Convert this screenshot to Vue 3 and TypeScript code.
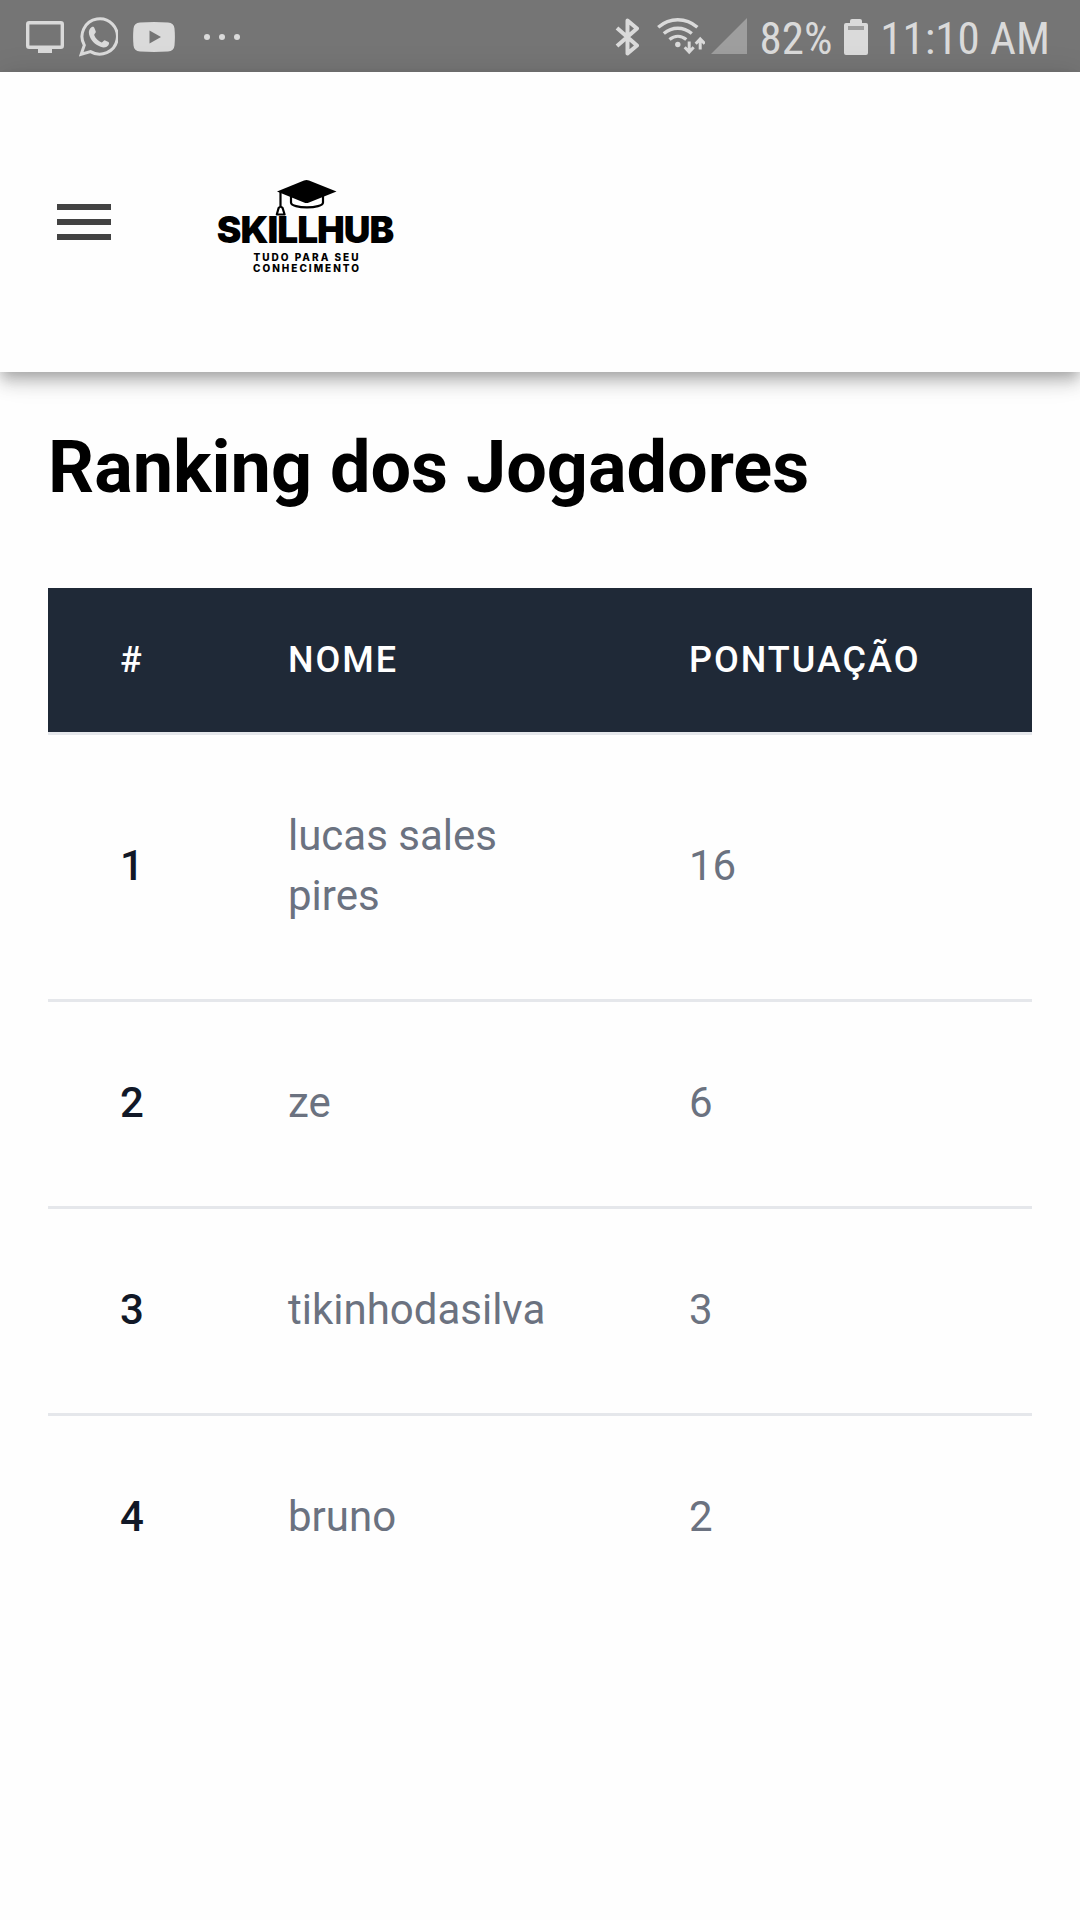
<script setup lang="ts">
interface Player {
  name: string
  score: number
}

const players: Player[] = [
  { name: 'lucas sales pires', score: 16 },
  { name: 'ze', score: 6 },
  { name: 'tikinhodasilva', score: 3 },
  { name: 'bruno', score: 2 },
]
</script>

<template>
  <div class="screen">
    <div class="status">
      <div class="notifications">
        <svg width="38" height="38" viewBox="0 0 38 38" aria-label="Transmissão">
          <rect x="1.700" y="4.700" width="34.600" height="24.600" rx="1.500" fill="none" stroke="currentColor" stroke-width="3.400" />
          <path d="M12 30h14v5H12z" fill="currentColor" />
        </svg>
        <svg width="39" height="40" viewBox="0 0 39 40" aria-label="WhatsApp">
          <path d="M5.300 28.200A17.700 17.700 0 1 1 11.500 34.600L2.200 37.300z" fill="none" stroke="currentColor" stroke-width="3" />
          <path d="M12.800 10c1.400-.6 2.400.1 2.800 1.400l1.200 3.200c.4 1.300-1.700 2.500-1.600 3.300 1.200 3.300 4.200 6.200 7.500 7.500 1 .2 2.200-2.500 3.500-2l3.300 1.700c1 .6.600 2.400-.3 3.500-1.700 2-4.700 2.300-7.600 1.200C15.800 27.600 11.500 23 10.100 17.500c-.8-3.300.4-6.400 2.700-7.500z" fill="currentColor" />
        </svg>
        <svg width="42" height="30" viewBox="0 0 42 30" aria-label="YouTube">
          <path fill-rule="evenodd" d="M7 .5Q21-.3 35 .5q6 .3 6.500 6 .8 8.500 0 17-.5 5.700-6.500 6-14 .8-28 0-6-.3-6.500-6-.8-8.500 0-17Q1 .8 7 .500zM16.500 8.500v13L28 15z" fill="currentColor" />
        </svg>
        <svg class="more" width="36" height="8" viewBox="0 0 36 8" fill="currentColor" aria-label="Mais notificações">
          <circle cx="3" cy="4" r="3" />
          <circle cx="18" cy="4" r="3" />
          <circle cx="33" cy="4" r="3" />
        </svg>
      </div>
      <div class="system">
        <svg width="24" height="38" viewBox="0 0 24 38" aria-label="Bluetooth">
          <path d="M2 10l20 17.500-9.500 8V2.500l9.500 8L2 28" fill="none" stroke="currentColor" stroke-width="4" stroke-linejoin="round" />
        </svg>
        <svg class="wifi" width="48" height="38" viewBox="0 0 48 38" fill="none" stroke="currentColor" aria-label="Wi-Fi">
          <path d="M1.200 9.200c11.600-10 27.600-10 39.200 0M6.800 15.500c8.500-7 19.500-7 28 0M12.500 21.500c5.200-4.200 11.600-4.200 16.800 0" stroke-width="3.400" />
          <circle cx="20.800" cy="26.500" r="2.700" fill="currentColor" stroke="none" />
          <path d="M32.200 23.500v9.500M27.700 29.300l4.500 4.700 4.500-4.700M43.200 31.500v-9.500M38.700 25.700l4.500-4.700 4.500 4.700" stroke-width="3" />
        </svg>
        <svg class="signal" width="36" height="38" viewBox="0 0 36 38" aria-label="Sinal móvel">
          <path d="M36 0v36H0z" fill="#9e9e9e" />
        </svg>
        <span>82%</span>
        <svg width="24" height="36" viewBox="0 0 24 36" aria-label="Bateria">
          <path d="M6 4V2q0-2 2-2h8q2 0 2 2v2h4q2 0 2 2v28q0 2-2 2H2q-2 0-2-2V6q0-2 2-2z" fill="currentColor" />
          <path d="M4 7h16v4H4z" fill="#9e9e9e" />
        </svg>
        <span>11:10 AM</span>
      </div>
    </div>

    <header class="toolbar">
      <button class="menu" type="button" aria-label="Abrir menu">
        <svg width="72" height="72" viewBox="0 0 24 24" fill="currentColor">
          <path d="M3 18h18v-2H3v2zm0-5h18v-2H3v2zm0-7v2h18V6H3z" />
        </svg>
      </button>
      <a class="logo" href="#" aria-label="Skillhub">
        <svg width="210" height="114" viewBox="0 0 210 114">
          <path d="M91 31v6.500c0 6.500 32 6.500 32 0V31" fill="#fff" stroke="#000" stroke-width="2.200" />
          <path d="M77 26.500L104 15.500q2.500-1 5 0L136.500 26.500 109 37.500q-2.500 1-5 0z" />
          <path d="M80.500 27v14" stroke="#000" stroke-width="2.200" />
          <path d="M78.600 43q2-2.500 4 0l2 6.500H76.800z" fill="#fff" stroke="#000" stroke-width="2.200" stroke-linejoin="round" />
          <text class="brand" x="105" y="78">SKILLHUB</text>
          <text class="tagline" x="107" y="96">TUDO PARA SEU</text>
          <text class="tagline" x="107" y="107">CONHECIMENTO</text>
        </svg>
      </a>
    </header>

    <main class="content">
      <h1>Ranking dos Jogadores</h1>
      <table>
        <thead>
          <tr>
            <th class="rank" scope="col">#</th>
            <th class="name" scope="col">NOME</th>
            <th scope="col">PONTUAÇÃO</th>
          </tr>
        </thead>
        <tbody>
          <tr v-for="(player, index) in players" :key="player.name">
            <td class="position">{{ index + 1 }}</td>
            <td>{{ player.name }}</td>
            <td>{{ player.score }}</td>
          </tr>
        </tbody>
      </table>
    </main>
  </div>
</template>

<style>
body {
  margin: 0;
  background: #fefefe;
}
</style>

<style scoped>
.screen {
  min-height: 100vh;
  background: #fefefe;
  font-family: Roboto, "Liberation Sans", sans-serif;
}

svg {
  display: block;
  flex: none;
}

.status {
  display: flex;
  align-items: center;
  justify-content: space-between;
  height: 72px;
  padding: 2px 30px 0 26px;
  box-sizing: border-box;
  background: #757575;
  color: #dadada;
}

.notifications {
  display: flex;
  align-items: center;
  gap: 15px;
}

.more {
  margin-left: 14px;
}

.system {
  display: flex;
  align-items: center;
  gap: 12px;
  font-family: "Roboto Condensed", "Liberation Sans Narrow", Roboto, sans-serif;
  font-size: 45px;
  line-height: 66px;
  white-space: nowrap;
}

.system span {
  padding-top: 4px;
}

.wifi {
  margin-left: 6px;
}

.signal {
  margin-left: -6px;
}

.toolbar {
  position: relative;
  display: flex;
  align-items: center;
  gap: 80px;
  height: 300px;
  padding: 0 48px;
  background: #fefefe;
  box-shadow:
    0 6px 12px -3px rgba(0, 0, 0, 0.2),
    0 12px 15px 0 rgba(0, 0, 0, 0.14),
    0 3px 30px 0 rgba(0, 0, 0, 0.12);
}

.menu {
  padding: 0;
  border: 0;
  background: none;
  color: #424242;
}

.logo {
  color: #000;
}

.brand {
  font: 900 37px Inter, sans-serif;
  letter-spacing: -1px;
  text-anchor: middle;
}

.tagline {
  font: 800 10px Inter, sans-serif;
  letter-spacing: 2px;
  text-anchor: middle;
}

.content {
  padding: 48px;
}

h1 {
  margin: 0 0 72px;
  color: #000;
  font-size: 72px;
  font-weight: 700;
  line-height: 96px;
}

table {
  width: 100%;
  table-layout: fixed;
  border-spacing: 0;
}

th {
  padding: 48px 72px;
  background: #1f2937;
  color: #fff;
  font-size: 36px;
  font-weight: 500;
  line-height: 48px;
  letter-spacing: 2px;
  text-align: left;
}

.rank {
  width: 24px;
}

.name {
  width: 257px;
}

td {
  padding: 71px 72px 73px;
  border-top: 3px solid #e5e7eb;
  color: #6b7280;
  font-size: 42px;
  line-height: 60px;
}

.position {
  color: #111827;
  font-weight: 500;
}
</style>
